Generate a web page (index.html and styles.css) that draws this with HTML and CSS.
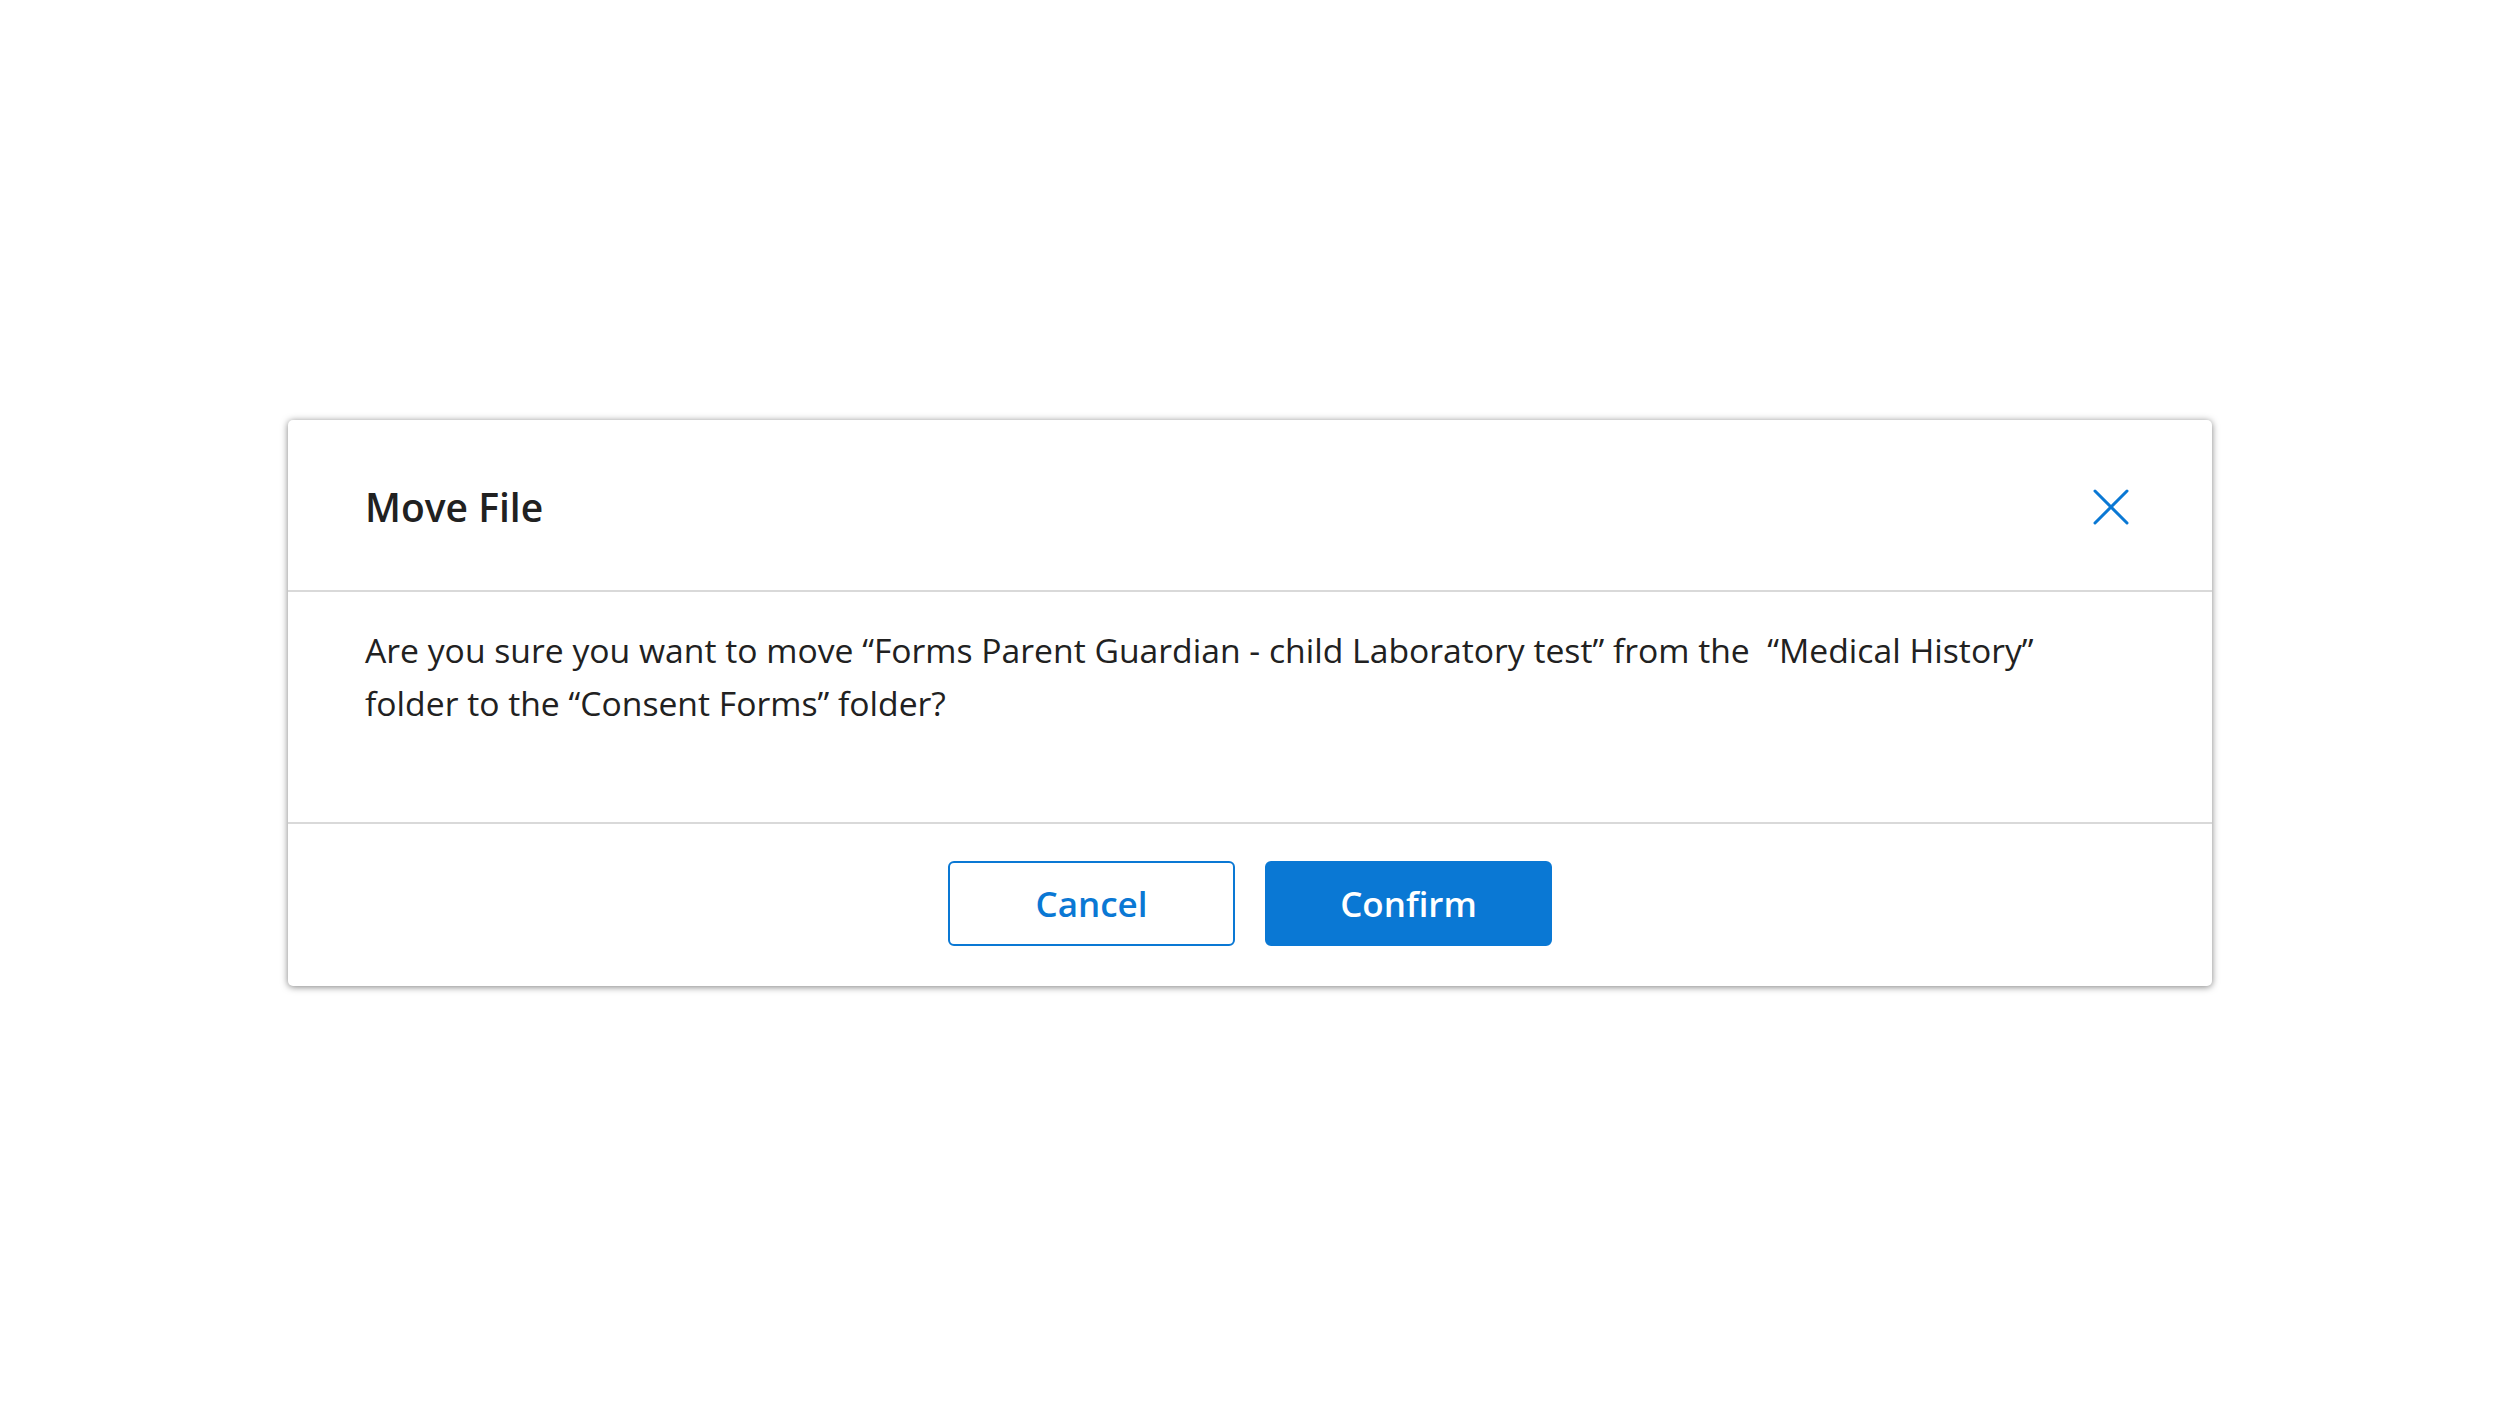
FILE: index.html
```html
<!DOCTYPE html>
<html lang="en">
<head>
<meta charset="utf-8">
<title>Move File</title>
<link rel="stylesheet" href="styles.css">
</head>
<body>
<div class="backdrop">
  <div class="dialog" role="dialog" aria-labelledby="dlg-title">
    <div class="dialog-header">
      <h2 class="dialog-title" id="dlg-title">Move File</h2>
      <button class="close-btn" aria-label="Close">
        <svg width="36" height="36" viewBox="0 0 36 36" aria-hidden="true">
          <path d="M2 2 L34 34 M34 2 L2 34" stroke="#0a78d4" stroke-width="3" stroke-linecap="round" fill="none"/>
        </svg>
      </button>
    </div>
    <div class="dialog-body">
      <p class="message">Are you sure you want to move “Forms Parent Guardian - child Laboratory test” from the&nbsp; “Medical History” folder to the “Consent Forms” folder?</p>
    </div>
    <div class="dialog-footer">
      <button class="btn btn-secondary">Cancel</button>
      <button class="btn btn-primary">Confirm</button>
    </div>
  </div>
</div>
</body>
</html>
```

FILE: styles.css
```css
* { box-sizing: border-box; }

html, body {
  margin: 0;
  padding: 0;
  background: #ffffff;
  font-family: "Open Sans", "Noto Sans", sans-serif;
  color: #212121;
}

.backdrop {
  width: 100%;
  height: 100vh;
  display: flex;
  align-items: center;
  justify-content: center;
}

.dialog {
  width: 1924px;
  background: #ffffff;
  border-radius: 5px;
  box-shadow: 0 1px 7px rgba(0, 0, 0, 0.5);
  display: flex;
  flex-direction: column;
}

.dialog-header {
  height: 172px;
  display: flex;
  align-items: center;
  justify-content: space-between;
  padding: 3px 83px 0 77px;
  border-bottom: 2px solid #d9d9d9;
}

.dialog-title {
  margin: 0;
  font-size: 39px;
  font-weight: 600;
  color: #212121;
  line-height: 1;
}

.close-btn {
  background: none;
  border: 0;
  padding: 0;
  width: 36px;
  height: 36px;
  display: flex;
  cursor: pointer;
}

.dialog-body {
  height: 232px;
  padding: 32px 130px 0 77px;
  border-bottom: 2px solid #d9d9d9;
}

.message {
  margin: 0;
  font-size: 33.7px;
  line-height: 53px;
  font-weight: 400;
  color: #212121;
}

.dialog-footer {
  height: 162px;
  display: flex;
  justify-content: center;
  align-items: flex-start;
  padding-top: 37px;
  gap: 30px;
}

.btn {
  width: 287px;
  height: 85px;
  border-radius: 6px;
  font-family: "Open Sans", "Noto Sans", sans-serif;
  font-size: 35px;
  font-weight: 600;
  cursor: pointer;
}

.btn-secondary {
  background: #ffffff;
  color: #0a78d4;
  border: 2px solid #0a78d4;
}

.btn-primary {
  background: #0a78d4;
  color: #ffffff;
  border: 2px solid #0a78d4;
}
```
